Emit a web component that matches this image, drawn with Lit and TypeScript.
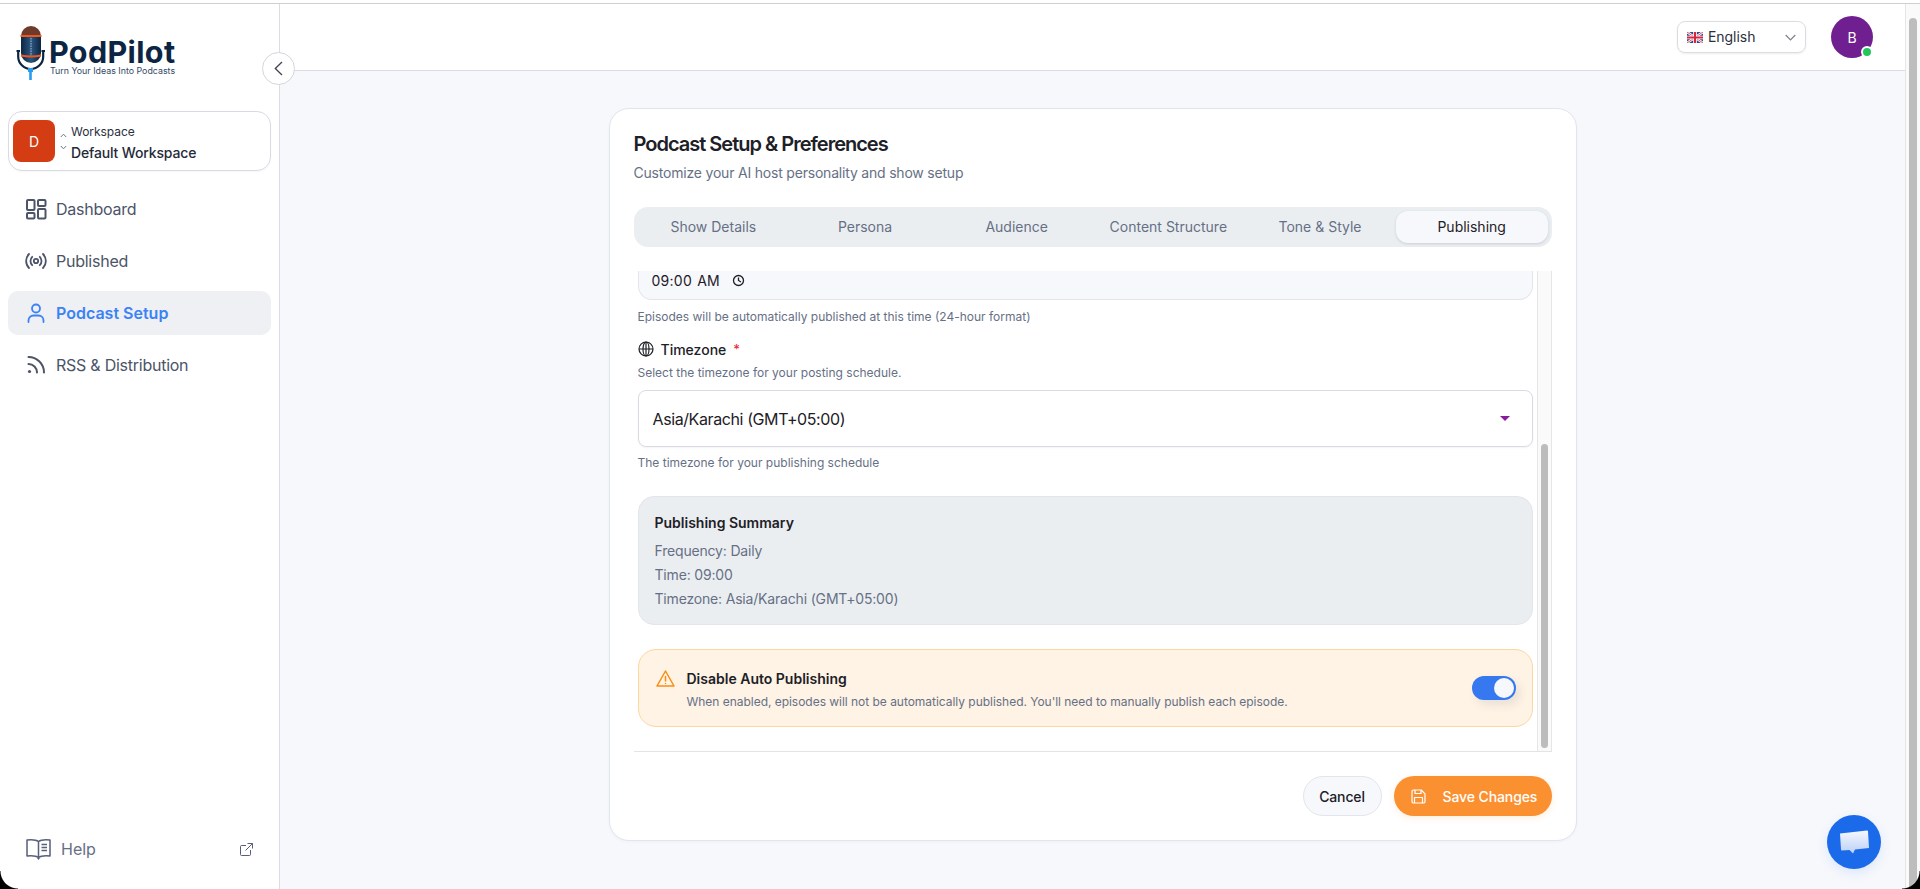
import { LitElement, html, css } from 'lit';
import { customElement, state } from 'lit/decorators.js';

const TABS = ['Show Details', 'Persona', 'Audience', 'Content Structure', 'Tone & Style', 'Publishing'];

const NAV = [
  {
    label: 'Dashboard',
    icon: html`<svg width="22" height="22" viewBox="0 0 22 22" fill="none" stroke="currentColor" stroke-width="2" stroke-linejoin="round">
      <rect x="2" y="2" width="7.5" height="10" rx="1"/><rect x="13" y="2" width="7.5" height="6" rx="1"/>
      <rect x="2" y="15" width="7.5" height="5.5" rx="1"/><rect x="13" y="11" width="7.5" height="9.5" rx="1"/></svg>`,
  },
  {
    label: 'Published',
    icon: html`<svg width="22" height="22" viewBox="0 0 22 22" fill="none" stroke="currentColor" stroke-width="1.8" stroke-linecap="round">
      <circle cx="11" cy="11" r="2.2"/><path d="M7.2 6.8a6 6 0 0 0 0 8.4M14.8 6.8a6 6 0 0 1 0 8.4"/>
      <path d="M4 4a10 10 0 0 0 0 14M18 4a10 10 0 0 1 0 14"/></svg>`,
  },
  {
    label: 'Podcast Setup',
    icon: html`<svg width="22" height="22" viewBox="0 0 22 22" fill="none" stroke="currentColor" stroke-width="1.8" stroke-linecap="round">
      <circle cx="11" cy="6.5" r="4"/><path d="M3.5 20v-1.5a5 5 0 0 1 5-5h5a5 5 0 0 1 5 5V20"/></svg>`,
  },
  {
    label: 'RSS & Distribution',
    icon: html`<svg width="22" height="22" viewBox="0 0 22 22" fill="none" stroke="currentColor" stroke-width="2" stroke-linecap="round">
      <path d="M3.5 3a15.5 15.5 0 0 1 15.5 15.5"/><path d="M3.5 10a8.5 8.5 0 0 1 8.5 8.5"/>
      <circle cx="4.5" cy="17.5" r="1.6" fill="currentColor" stroke="none"/></svg>`,
  },
];

@customElement('app-root')
export class AppRoot extends LitElement {
  @state() activeTab = 'Publishing';
  @state() activeNav = 'Podcast Setup';
  @state() autoOff = true;

  static styles = css`
    :host {
      display: flex;
      flex-direction: column;
      position: relative;
      height: 100vh;
      overflow: hidden;
      font-family: Inter, 'Noto Sans', sans-serif;
      background: #fff;
      color: #1f2430;
    }
    svg { display: block; flex: none; }

    .topline { height: 3px; flex: none; border-bottom: 1px solid #cfcfcf; background: #fff; }
    .frame { flex: 1; display: flex; min-height: 0; }

    /* sidebar */
    .sidebar {
      width: 280px;
      flex: none;
      box-sizing: border-box;
      border-right: 1px solid #dcdde3;
      padding: 0 8px 18px;
      display: flex;
      flex-direction: column;
      background: #fff;
    }
    .logo { display: flex; height: 54px; margin: 22px 0 31px 8px; }
    .logo-text { margin: 11px 0 0 4px; }
    .logo-name { font-size: 30.5px; line-height: 29px; font-weight: 700; color: #0c2542; letter-spacing: 0.35px; }
    .logo-tag { font-size: 8.85px; line-height: 10px; color: #334a66; margin-left: 1px; white-space: nowrap; }

    .workspace {
      height: 60px;
      box-sizing: border-box;
      border: 1px solid #d9dae2;
      border-radius: 14px;
      padding: 0 4px;
      display: flex;
      align-items: center;
      box-shadow: 0 1px 2px rgba(20, 20, 40, 0.04);
    }
    .ws-avatar {
      width: 42px;
      height: 42px;
      border-radius: 8px;
      background: #d43c14;
      color: #fff;
      font-size: 14px;
      display: flex;
      align-items: center;
      justify-content: center;
      flex: none;
    }
    .ws-chev { margin: 0 4px 0 5px; color: #6b7390; }
    .ws-text { padding-top: 4px; }
    .ws-label { font-size: 12px; line-height: 16px; color: #2b3040; letter-spacing: -0.05px; }
    .ws-name { font-size: 14px; line-height: 20px; margin-top: 3px; font-weight: 500; color: #252a38; letter-spacing: -0.15px; }

    .nav { margin-top: 16px; display: flex; flex-direction: column; gap: 8px; }
    .nav-item {
      height: 44px;
      display: flex;
      align-items: center;
      gap: 9px;
      padding-left: 17px;
      border-radius: 10px;
      font-size: 16px;
      letter-spacing: -0.25px;
      color: #4b5468;
    }
    .nav-item.active { background: #eef0f4; color: #3b82f6; font-weight: 600; letter-spacing: 0; }

    .help {
      margin-top: auto;
      height: 44px;
      display: flex;
      align-items: center;
      padding: 0 18px;
      font-size: 16px;
      color: #667085;
    }
    .help span { margin-left: 10px; flex: 1; }
    .help svg { color: #565f7c; }

    /* main */
    .main { flex: 1; min-width: 0; display: flex; flex-direction: column; background: #f7f8fc; }
    .header {
      height: 67px;
      flex: none;
      box-sizing: border-box;
      background: #fff;
      border-bottom: 1px solid #dcdde3;
      display: flex;
      align-items: center;
      justify-content: flex-end;
      gap: 25px;
      padding: 0 32px 0 0;
    }
    .lang {
      width: 129px;
      height: 32px;
      box-sizing: border-box;
      border: 1px solid #dcdde3;
      border-radius: 8px;
      display: flex;
      align-items: center;
      padding: 0 9px;
      font-size: 14px;
      color: #2b3040;
      box-shadow: 0 1px 2px rgba(20, 20, 40, 0.08);
    }
    .lang span { margin: 0 0 2px 5px; flex: 1; letter-spacing: -0.05px; }
    .user {
      position: relative;
      width: 42px;
      height: 42px;
      border-radius: 50%;
      background: #6f1f8f;
      color: #fff;
      font-size: 14px;
      display: flex;
      align-items: center;
      justify-content: center;
    }
    .user::after {
      content: '';
      position: absolute;
      right: 0;
      bottom: 0;
      width: 8px;
      height: 8px;
      border-radius: 50%;
      background: #22c55e;
      border: 2px solid #fff;
    }

    .card {
      width: 968px;
      box-sizing: border-box;
      margin: 37px auto 0;
      padding: 21px 24px 24px;
      background: #fff;
      border: 1px solid #e2e5ee;
      border-radius: 20px;
      box-shadow: 0 1px 3px rgba(30, 40, 70, 0.04);
    }
    .card h1 { margin: 0; font-size: 20px; line-height: 28px; font-weight: 600; letter-spacing: -1px; color: #1d2027; }
    .card .sub { margin: 5px 0 0; font-size: 14px; line-height: 20px; color: #667085; letter-spacing: -0.2px; }

    .tabs {
      margin-top: 24px;
      height: 40px;
      box-sizing: border-box;
      padding: 4px;
      border-radius: 14px;
      background: #ebeef1;
      display: grid;
      grid-template-columns: repeat(6, 1fr);
    }
    .tab {
      box-sizing: border-box;
      padding-bottom: 1px;
      border-radius: 12px;
      display: flex;
      align-items: center;
      justify-content: center;
      font-size: 14px;
      color: #667085;
    }
    .tab.active { background: #f7f8fc; color: #1d2027; box-shadow: 0 1px 3px rgba(30, 40, 70, 0.16); }

    .scroll {
      margin-top: 24px;
      height: 480px;
      display: flex;
      border-bottom: 1px solid #e3e4e8;
    }
    .content { flex: 1; min-width: 0; padding: 0 4px 24px; box-sizing: border-box; }
    .track {
      width: 15px;
      flex: none;
      box-sizing: border-box;
      background: #fafafa;
      border-left: 1px solid #e6e6e6;
      border-right: 1px solid #e6e6e6;
      padding: 173px 3px 3px;
    }
    .thumb { height: 100%; border-radius: 4px; background: #bcbcbc; }

    .time {
      height: 29px;
      box-sizing: border-box;
      background: #f7f8fc;
      border: 1px solid #e2e5ee;
      border-top: none;
      border-radius: 0 0 14px 14px;
      padding: 0 13px 9px;
      display: flex;
      align-items: center;
      gap: 12px;
      font-size: 14px;
      letter-spacing: 0.25px;
      color: #1d2027;
      word-spacing: 1px;
    }
    .hint { font-size: 12px; line-height: 16px; color: #667085; }
    .h1 { margin-top: 9px; }
    .label { margin-top: 14px; height: 20px; display: flex; align-items: center; font-size: 14px; font-weight: 500; color: #1d2027; }
    .label svg { margin-right: 7px; }
    .label i { color: #ef2b3c; font-style: normal; margin-left: 7px; font-size: 13px; }
    .h2 { margin-top: 6px; }
    .select {
      margin-top: 9px;
      height: 57px;
      box-sizing: border-box;
      border: 1px solid #d9dbe3;
      border-radius: 8px;
      padding: 0 22px 0 14px;
      display: flex;
      align-items: center;
      justify-content: space-between;
      font-size: 16px;
      letter-spacing: -0.4px;
      color: #1d2027;
      box-shadow: 0 1px 2px rgba(20, 20, 40, 0.05);
    }
    .caret { width: 0; height: 0; border: 5px solid transparent; border-top-color: #8a1a9e; border-bottom: none; }
    .h3 { margin-top: 8px; }

    .summary {
      margin-top: 25px;
      height: 129px;
      box-sizing: border-box;
      background: #ebeef1;
      border: 1px solid #e2e5ea;
      border-radius: 16px;
      padding: 16px;
    }
    .summary h2 { margin: 0 0 6px; font-size: 14px; line-height: 20px; font-weight: 600; color: #1d2027; }
    .summary div { font-size: 14px; line-height: 24px; color: #667085; letter-spacing: -0.18px; }

    .warning {
      margin-top: 24px;
      height: 78px;
      box-sizing: border-box;
      background: #fef3e5;
      border: 1px solid #fcd79e;
      border-radius: 18px;
      padding: 19px 16px 0 17px;
      display: flex;
    }
    .warning svg { margin-right: 12px; margin-top: 1px; }
    .warn-text { flex: 1; }
    .warn-title { font-size: 14px; line-height: 20px; font-weight: 600; color: #1d2027; }
    .warn-desc { font-size: 12px; line-height: 16px; margin-top: 5px; color: #667085; letter-spacing: -0.03px; }
    .toggle {
      width: 44px;
      height: 24px;
      flex: none;
      margin-top: 7px;
      border: none;
      border-radius: 12px;
      padding: 2px;
      background: #3578f0;
      display: flex;
      justify-content: flex-end;
      box-shadow: 4px 5px 10px rgba(60, 60, 80, 0.1);
      cursor: pointer;
    }
    .toggle.off { background: #c9ced8; justify-content: flex-start; }
    .toggle::after { content: ''; width: 20px; height: 20px; border-radius: 50%; background: #f7f8fc; }

    .actions { margin-top: 24px; display: flex; justify-content: flex-end; gap: 12px; }
    .btn {
      height: 40px;
      box-sizing: border-box;
      border-radius: 20px;
      font: inherit;
      font-size: 14px;
      font-weight: 500;
      display: flex;
      align-items: center;
      cursor: pointer;
    }
    .cancel { width: 79px; justify-content: center; background: #f7f8fc; border: 1px solid #e2e5ee; color: #1d2027; letter-spacing: -0.15px; }
    .save {
      width: 158px;
      padding: 0 0 0 17px;
      gap: 17px;
      background: #fb9030;
      border: none;
      color: #fff;
      letter-spacing: -0.1px;
      box-shadow: 0 2px 6px rgba(251, 144, 48, 0.15);
    }

    .page-scroll {
      width: 15px;
      flex: none;
      box-sizing: border-box;
      background: #fafafa;
      border-left: 1px solid #e6e6e6;
      padding: 14px 3px 0 3px;
    }
    .page-scroll div { height: 100%; background: #bdbdbd; border-radius: 5px 5px 0 0; }

    /* over the content */
    .collapse {
      position: absolute;
      left: 262px;
      top: 52px;
      width: 33px;
      height: 33px;
      box-sizing: border-box;
      border: 1px solid #d4d6dd;
      border-radius: 50%;
      background: #fff;
      display: flex;
      align-items: center;
      justify-content: center;
      color: #3e4352;
    }
    .chat {
      position: absolute;
      left: 1827px;
      top: 815px;
      width: 54px;
      height: 54px;
      border-radius: 50%;
      background: #1a6aea;
      display: flex;
      align-items: center;
      justify-content: center;
      box-shadow: 0 4px 12px rgba(26, 106, 234, 0.12);
    }
    .corner { position: absolute; bottom: 0; width: 18px; height: 18px; }
    .corner.l { left: 0; background: radial-gradient(circle at 100% 0, transparent 17px, #000 18px); }
    .corner.r { right: 0; background: radial-gradient(circle at 0 0, transparent 17px, #000 18px); }
  `;

  render() {
    return html`
      <div class="topline"></div>
      <div class="frame">
        <aside class="sidebar">
          <div class="logo">
            ${this.renderMic()}
            <div class="logo-text">
              <div class="logo-name">PodPilot</div>
              <div class="logo-tag">Turn Your Ideas Into Podcasts</div>
            </div>
          </div>

          <div class="workspace">
            <div class="ws-avatar">D</div>
            <svg class="ws-chev" width="7" height="17" viewBox="0 0 7 17" fill="none" stroke="currentColor" stroke-width="1">
              <path d="M.8 4 3.5 1.2 6.2 4M.8 13l2.7 2.8L6.2 13"/>
            </svg>
            <div class="ws-text">
              <div class="ws-label">Workspace</div>
              <div class="ws-name">Default Workspace</div>
            </div>
          </div>

          <nav class="nav">
            ${NAV.map(
              (n) => html`<div class="nav-item ${n.label === this.activeNav ? 'active' : ''}" @click=${() => (this.activeNav = n.label)}>
                ${n.icon}${n.label}
              </div>`
            )}
          </nav>

          <div class="help">
            <svg width="25" height="22" viewBox="0 0 25 22" fill="none" stroke="currentColor" stroke-width="1.5">
              <path d="M12.5 3.5C10.500 2 6 1.500 1 2v16c5-.5 9.500 0 11.500 1.500 2-1.500 6.500-2 11.500-1.500V2c-5-.5-9.500 0-11.500 1.500Z" stroke-linejoin="round"/>
              <path d="M12.500 3.500v16M15.500 6.500h5.500M15.500 9.500h5.500M15.500 12.500h5.500" />
              <path d="M11 20h3l-1.500 2Z" fill="currentColor" stroke="none"/>
            </svg>
            <span>Help</span>
            <svg width="13" height="13" viewBox="0 0 13 13" fill="none" stroke="currentColor" stroke-width="1">
              <path d="M6 2.500H1.500a1 1 0 0 0-1 1v8a1 1 0 0 0 1 1h8a1 1 0 0 0 1-1V7M7.500.5h5v5M12.500.5 5.500 7.500"/>
            </svg>
          </div>
        </aside>

        <div class="main">
          <header class="header">
            <div class="lang">
              ${this.renderFlag()}
              <span>English</span>
              <svg width="11" height="7" viewBox="0 0 11 7" fill="none" stroke="#7b8090" stroke-width="1.200"><path d="m.7 1 4.800 4.800L10.300 1"/></svg>
            </div>
            <div class="user">B</div>
          </header>

          <section class="card">
            <h1>Podcast Setup &amp; Preferences</h1>
            <p class="sub">Customize your AI host personality and show setup</p>

            <div class="tabs">
              ${TABS.map(
                (t) => html`<div class="tab ${t === this.activeTab ? 'active' : ''}" @click=${() => (this.activeTab = t)}>${t}</div>`
              )}
            </div>

            <div class="scroll">
              <div class="content">
                <div class="time">
                  <span>09:00 AM</span>
                  <svg width="13" height="13" viewBox="0 0 13 13" fill="none" stroke="#1d2027" stroke-width="1.300">
                    <circle cx="6.500" cy="6.500" r="5"/><path d="M6.500 3.500v3l2.500 1.500"/>
                  </svg>
                </div>
                <div class="hint h1">Episodes will be automatically published at this time (24-hour format)</div>

                <div class="label">
                  <svg width="16" height="16" viewBox="0 0 16 16" fill="none" stroke="#1d2027" stroke-width="1.200">
                    <circle cx="8" cy="8" r="7"/><ellipse cx="8" cy="8" rx="3" ry="7"/><path d="M1 8h14M8 1v14"/>
                  </svg>
                  Timezone <i>*</i>
                </div>
                <div class="hint h2">Select the timezone for your posting schedule.</div>

                <div class="select">
                  <span>Asia/Karachi (GMT+05:00)</span>
                  <div class="caret"></div>
                </div>
                <div class="hint h3">The timezone for your publishing schedule</div>

                <div class="summary">
                  <h2>Publishing Summary</h2>
                  <div>Frequency: Daily</div>
                  <div>Time: 09:00</div>
                  <div>Timezone: Asia/Karachi (GMT+05:00)</div>
                </div>

                <div class="warning">
                  <svg width="19" height="17" viewBox="0 0 19 17" fill="none" stroke="#fb8c14" stroke-width="1.500" stroke-linejoin="round" stroke-linecap="round">
                    <path d="M9.500 1 1 16h17L9.500 1Z"/><path d="M9.500 6.500v4.500M9.500 13.400v.1"/>
                  </svg>
                  <div class="warn-text">
                    <div class="warn-title">Disable Auto Publishing</div>
                    <div class="warn-desc">When enabled, episodes will not be automatically published. You'll need to manually publish each episode.</div>
                  </div>
                  <button class="toggle ${this.autoOff ? '' : 'off'}" aria-label="Disable Auto Publishing" @click=${() => (this.autoOff = !this.autoOff)}></button>
                </div>
              </div>
              <div class="track"><div class="thumb"></div></div>
            </div>

            <div class="actions">
              <button class="btn cancel">Cancel</button>
              <button class="btn save">
                <svg width="15" height="15" viewBox="0 0 15 15" fill="none" stroke="#fff" stroke-width="1.200" stroke-linejoin="round">
                  <path d="M1 2.500A1.500 1.500 0 0 1 2.500 1h7.700L14 4.800v7.700a1.500 1.500 0 0 1-1.500 1.500h-10A1.500 1.500 0 0 1 1 12.500Z"/>
                  <path d="M4 1v3.500h6V1M3.500 14V8.500h8V14"/>
                </svg>
                Save Changes
              </button>
            </div>
          </section>
        </div>

        <div class="page-scroll"><div></div></div>
      </div>

      <div class="collapse">
        <svg width="9" height="15" viewBox="0 0 9 15" fill="none" stroke="currentColor" stroke-width="1.300"><path d="M8 1 1.300 7.500 8 14"/></svg>
      </div>
      <div class="chat">${this.renderChat()}</div>
      <div class="corner l"></div>
      <div class="corner r"></div>
    `;
  }

  private renderMic() {
    return html`<svg width="29" height="54" viewBox="0 0 29 54">
      <defs>
        <linearGradient id="micBody" x1="0" x2="1" y1="0" y2="0">
          <stop offset="0" stop-color="#0c2542"/><stop offset=".5" stop-color="#2c5680"/><stop offset="1" stop-color="#0c2542"/>
        </linearGradient>
      </defs>
      <path d="M5 10a10 10 0 0 1 20 0v1H5Z" fill="#6e3a2a"/>
      <path d="M5 11h20v16a10 10 0 0 1-20 0Z" fill="url(#micBody)"/>
      <path d="M15 12v20" stroke="#a9c2dc" stroke-width="1" stroke-dasharray="1.500 1"/>
      <rect x="4.500" y="9" width="21" height="2" fill="#f0561d"/>
      <path d="M5 29.500q10 2 20 0" stroke="#f0561d" stroke-width="1.800" fill="none"/>
      <path d="M2.200 24v6.500a12.500 12.500 0 0 0 25 0V24" fill="none" stroke="#0c2542" stroke-width="2.200"/>
      <rect x=".5" y="24" width="3.500" height="2" fill="#0c2542"/><rect x="25.500" y="24" width="3.500" height="2" fill="#0c2542"/>
      <rect x="12" y="42" width="5" height="4" fill="#2b9bf0"/>
      <rect x="13.200" y="46" width="2.600" height="8" fill="#2b9bf0"/>
    </svg>`;
  }

  private renderFlag() {
    return html`<svg width="16" height="11" viewBox="0 0 16 11">
      <rect width="16" height="11" rx="1.500" fill="#2b4a8f"/>
      <path d="M0 0 16 11M16 0 0 11" stroke="#fff" stroke-width="2.400"/>
      <path d="M0 0 16 11M16 0 0 11" stroke="#d8263c" stroke-width=".8"/>
      <path d="M8 0v11M0 5.500h16" stroke="#fff" stroke-width="3.600"/>
      <path d="M8 0v11M0 5.500h16" stroke="#d8263c" stroke-width="2"/>
    </svg>`;
  }

  private renderChat() {
    return html`<svg width="30" height="26" viewBox="0 0 30 26">
      <defs>
        <linearGradient id="chatFill" x1="0" x2="0" y1="0" y2="1">
          <stop offset="0" stop-color="#f6f8fe"/><stop offset="1" stop-color="#bcd0f6"/>
        </linearGradient>
      </defs>
      <path d="M1 4.500 28 1.500a1 1 0 0 1 1 1l1 16.500-14 1.500-2 4-3.500-3.500L3 21.500a1 1 0 0 1-1-1Z" fill="url(#chatFill)"/>
    </svg>`;
  }
}

declare global {
  interface HTMLElementTagNameMap {
    'app-root': AppRoot;
  }
}
